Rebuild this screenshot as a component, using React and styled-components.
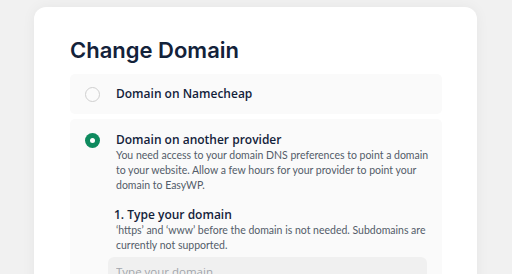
import React, { useState } from 'react';
import styled, { createGlobalStyle } from 'styled-components';

const GlobalStyle = createGlobalStyle`
  html, body {
    margin: 0;
    padding: 0;
    background: #f1f1f1;
    font-family: Inter, "Noto Sans", sans-serif;
    overflow: hidden;
  }
`;

const Page = styled.div`
  width: 512px;
  height: 274px;
  padding: 7px 0 0 34px;
  box-sizing: border-box;
  overflow: hidden;
`;

const Card = styled.div`
  width: 443px;
  min-height: 300px;
  background: #ffffff;
  border-radius: 12px;
  box-shadow: 0 0 14px rgba(0, 0, 0, 0.05);
  padding: 28px 35px 0 36px;
  box-sizing: border-box;
  display: flex;
  flex-direction: column;
`;

const Title = styled.h1`
  margin: 0 0 9px;
  font-size: 22px;
  line-height: 30px;
  font-weight: 600;
  color: #13223a;
`;

const Options = styled.div`
  display: flex;
  flex-direction: column;
  gap: 5px;
`;

const Option = styled.div`
  background: #fafafa;
  border-radius: 5px;
  padding: ${(p) => (p.open ? '13px 12px 0 15px' : '12px 15px')};
  display: flex;
  align-items: flex-start;
  gap: 16px;
  min-height: ${(p) => (p.open ? '200px' : '16px')};
  cursor: pointer;
`;

const Radio = styled.span`
  flex: none;
  width: 15px;
  height: 15px;
  margin-top: 1px;
  border-radius: 50%;
  box-sizing: border-box;
  background: ${(p) => (p.checked ? '#0e8a5e' : '#fbfbfb')};
  border: ${(p) => (p.checked ? 'none' : '1px solid #cfcfcf')};
  display: flex;
  align-items: center;
  justify-content: center;

  &::after {
    content: '';
    width: 5px;
    height: 5px;
    border-radius: 50%;
    background: #ffffff;
    display: ${(p) => (p.checked ? 'block' : 'none')};
  }
`;

const Body = styled.div`
  flex: 1;
  display: flex;
  flex-direction: column;
`;

const Label = styled.div`
  font-family: "Open Sans", "Noto Sans", sans-serif;
  font-size: 12px;
  line-height: 16px;
  font-weight: 600;
  color: #13223a;
`;

const Text = styled.p`
  margin: 0;
  font-family: Lato, "Noto Sans", sans-serif;
  font-size: 10.5px;
  line-height: 15px;
  color: #535c69;
`;

const Step = styled.div`
  margin-top: 14px;
  display: flex;
  flex-direction: column;
`;

const StepTitle = styled(Label)`
  margin-left: -2px;
`;

const Input = styled.input`
  margin: 4px 3px 0 -8px;
  padding: 7px 8px;
  line-height: 16px;
  border: none;
  outline: none;
  border-radius: 6px;
  background: #f0f0f0;
  font-family: "Open Sans", "Noto Sans", sans-serif;
  font-size: 11.5px;
  color: #13223a;

  &::placeholder {
    color: #a2a6ac;
  }
`;

export default function App() {
  const [choice, setChoice] = useState('other');

  return (
    <>
      <GlobalStyle />
      <Page>
        <Card>
          <Title>Change Domain</Title>
          <Options>
            <Option onClick={() => setChoice('namecheap')}>
              <Radio checked={choice === 'namecheap'} />
              <Label>Domain on Namecheap</Label>
            </Option>
            <Option open onClick={() => setChoice('other')}>
              <Radio checked={choice === 'other'} />
              <Body>
                <Label>Domain on another provider</Label>
                <Text>
                  You need access to your domain DNS preferences to point a domain
                  to your website. Allow a few hours for your provider to point your
                  domain to EasyWP.
                </Text>
                <Step>
                  <StepTitle>1. Type your domain</StepTitle>
                  <Text>
                    ‘https’ and ‘www’ before the domain is not needed. Subdomains are
                    currently not supported.
                  </Text>
                  <Input placeholder="Type your domain" />
                </Step>
              </Body>
            </Option>
          </Options>
        </Card>
      </Page>
    </>
  );
}
